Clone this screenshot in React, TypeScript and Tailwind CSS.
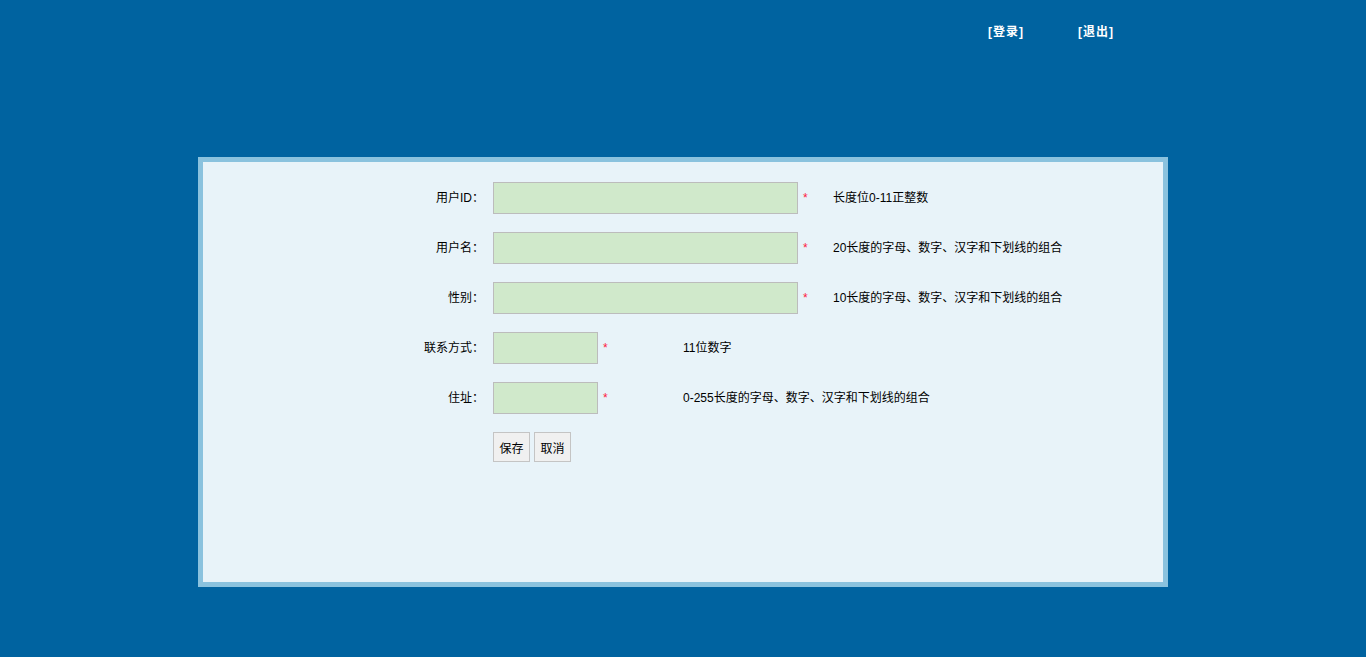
const fields = [
  { label: "用户ID：", wide: true, hint: "长度位0-11正整数" },
  { label: "用户名：", wide: true, hint: "20长度的字母、数字、汉字和下划线的组合" },
  { label: "性别：", wide: true, hint: "10长度的字母、数字、汉字和下划线的组合" },
  { label: "联系方式：", wide: false, hint: "11位数字" },
  { label: "住址：", wide: false, hint: "0-255长度的字母、数字、汉字和下划线的组合" },
];

export default function App() {
  return (
    <div
      className="min-h-[657px] bg-[#0063a0] text-[12px] text-black"
      style={{ fontFamily: '"Liberation Sans", "Noto Sans CJK SC", sans-serif' }}
    >
      {/* top links */}
      <div className="flex h-[157px] justify-end gap-[54px] pr-[252px] pt-[24px] font-bold tracking-[1px] text-white">
        <a className="h-[16px] leading-[16px]">[登录]</a>
        <a className="h-[16px] leading-[16px]">[退出]</a>
      </div>

      <div className="mx-auto h-[430px] w-[970px] border-[5px] border-[#8ac2de] bg-[#e8f3f9]">
        <div className="flex flex-col gap-[18px] pt-[20px]">
          {fields.map((f) => (
            <div key={f.label} className="flex h-[32px] items-center">
              <label className="w-[281px] text-right">{f.label}</label>
              <input
                className={
                  "ml-[9px] h-[32px] border border-[#bcbcbc] bg-[#d0e9cb] outline-none " +
                  (f.wide ? "w-[305px]" : "w-[105px]")
                }
              />
              <span
                className={
                  "ml-[5px] text-[#ff1a3c] " + (f.wide ? "w-[30px]" : "w-[80px]")
                }
              >
                *
              </span>
              <span>{f.hint}</span>
            </div>
          ))}
          <div className="flex gap-[4px] pl-[290px]">
            <button className="h-[30px] w-[37px] border border-[#c4c4c4] bg-[#f0f0f0] pt-[3px] text-[12px]">
              保存
            </button>
            <button className="h-[30px] w-[37px] border border-[#c4c4c4] bg-[#f0f0f0] pt-[3px] text-[12px]">
              取消
            </button>
          </div>
        </div>
      </div>
    </div>
  );
}
